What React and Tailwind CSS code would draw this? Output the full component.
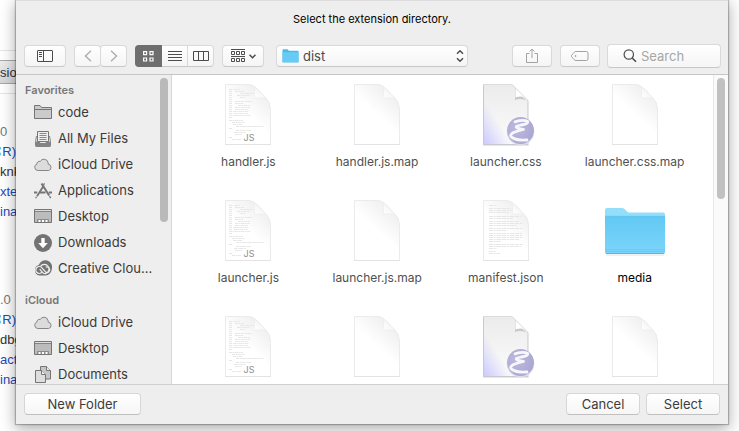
const toolButton =
  "flex h-[22px] items-center justify-center rounded-[4px] border border-[#d9d9d9] border-b-[#c8c8c8] bg-linear-to-b from-white to-[#f5f5f5]";
const pushButton =
  "h-[22px] rounded-[4px] border border-[#d6d6d6] border-b-[#c0c0c0] bg-linear-to-b from-white to-[#f6f6f6] text-[13px] leading-5 text-[#3c3c3c]";

/* ---------- sidebar icons ---------- */

function FolderIcon() {
  return (
    <svg width="18" height="18" viewBox="0 0 18 18" fill="#cbcbcb" stroke="#757575" strokeWidth="1">
      <path d="M.5 14.500V1.500h5.500l1.500 2h10v11z" />
      <path d="M.5 5.500h17" />
    </svg>
  );
}

function FilesIcon() {
  return (
    <svg width="18" height="18" viewBox="0 0 18 18">
      <path d="M3.500 1.500h11v10h-11z" fill="#f0f0f0" stroke="#757575" />
      <path d="M5.500 3.500h7M5.500 5.500h7M5.500 7.500h7M5.500 9.500h7" stroke="#8a8a8a" fill="none" />
      <path d="M2.500 6L1.500 11.500v4.200q0 .8.800.8h13.400q.8 0 .8-.8v-4.200L15.500 6" fill="none" stroke="#858585" />
      <path d="M1.500 11.500h4l1 1.500h5l1-1.500h4v5h-15z" fill="#838383" />
    </svg>
  );
}

function CloudIcon() {
  return (
    <svg width="18" height="18" viewBox="0 0 18 18">
      <path
        d="M3.900 14.500a3.300 3.300 0 0 1-1-6.400 2.600 2.600 0 0 1 3.300-2.700 4.300 4.300 0 0 1 8 1.500c.1.500.1.900 0 1.300a3.200 3.200 0 0 1 .4 6.300z"
        fill="#dcdcdc"
        stroke="#868686"
      />
    </svg>
  );
}

function AppsIcon() {
  return (
    <svg width="18" height="18" viewBox="0 0 18 18" fill="none" stroke="#757575">
      <path d="M9.800 3.500L3 14.300" strokeWidth="1.800" />
      <path d="M7.500 1.500L15.200 13.500" strokeWidth="2" />
      <path d="M10.500 1.300l-.9 1.500M2.400 14.800l-.7 1.400M15.500 14.200l1.200 2" strokeWidth="1.300" />
      <path d="M0 10.500h3.200M6 10.500h5.500M14.800 10.500H18" strokeWidth="2" />
    </svg>
  );
}

function DesktopIcon() {
  return (
    <svg width="18" height="18" viewBox="0 0 18 18">
      <path d="M.5 1.500h17v13H.5z" fill="#bcbcbc" stroke="#757575" />
      <path d="M1 2.500h16" stroke="#dedede" />
      <path d="M1 3.500h16" stroke="#858585" />
      <path d="M3.500 14v-2.500h11V14" fill="#909090" stroke="#8a8a8a" />
      <path d="M4.500 13h2M8 13h2M11.500 13h2" stroke="#fff" strokeWidth="1.800" />
    </svg>
  );
}

function DownloadsIcon() {
  return (
    <svg width="18" height="18" viewBox="0 0 18 18">
      <circle cx="9" cy="9" r="9" fill="#737373" />
      <path d="M7.300 4h3.400v5h3.100L9 14.200 4.200 9h3.100z" fill="#fff" />
    </svg>
  );
}

function CreativeCloudIcon() {
  return (
    <svg width="18" height="18" viewBox="0 0 18 18">
      <path
        d="M5.500 15.500A5.400 5.400 0 0 1 4.800 5 6.800 6.800 0 0 1 17.800 9a6.500 6.500 0 0 1-6.300 6.500z"
        fill="#737373"
      />
      <g fill="none" stroke="#f0f0f0" strokeWidth="1.200">
        <path d="M8 12.200A3.500 3.500 0 1 1 8 7.800l3.500 4.100a2.700 2.700 0 1 0 .2-4.600" />
        <path d="M6.500 6.400a4.700 4.700 0 1 1 5 7.300c-1.300 0-2.300-.5-3-1.400L5.700 9.200" />
      </g>
    </svg>
  );
}

function DocumentsIcon() {
  return (
    <svg width="18" height="18" viewBox="0 0 18 18" stroke="#757575" strokeLinejoin="round">
      <path d="M6.500.5h6l4 4v8.500h-10z" fill="#c6c6c6" />
      <path d="M12.500.5v4h4" fill="#eee" />
      <path d="M1.500 4.500h6l4 4v8h-10z" fill="#dedede" />
      <path d="M7.500 4.500v4h4" fill="#f4f4f4" />
    </svg>
  );
}

/* ---------- file icons ---------- */

const codeLines = [
  [13, 6, 4], [18, 6, 6], [13, 8, 3], [19, 8, 9], [13, 10, 3], [24, 10, 13], [13, 12, 3], [21, 12, 13],
  [13, 14, 3], [24, 14, 5], [13, 16, 3], [13, 18, 3], [19, 18, 17], [13, 20, 3], [19, 20, 8], [13, 22, 3],
  [22, 22, 12], [13, 24, 3], [19, 24, 15], [13, 26, 3], [19, 26, 13], [13, 28, 3], [17, 28, 16], [13, 30, 3],
  [18, 30, 14], [13, 32, 22], [13, 34, 3], [13, 37, 14], [16, 39, 13], [17, 41, 9], [20, 43, 28], [13, 45, 3],
  [20, 47, 15], [18, 49, 12], [19, 51, 7], [13, 54, 3], [16, 56, 9],
];

const proseLines = [
  [15, 6, 8], [15, 9, 22], [15, 11, 26], [15, 13, 20], [15, 17, 32], [15, 19, 24], [15, 22, 30], [15, 24, 34],
  [15, 26, 28], [15, 29, 34], [15, 31, 17], [15, 34, 33], [15, 36, 34], [15, 38, 34], [15, 40, 30], [15, 42, 12],
  [15, 45, 34], [15, 47, 32], [15, 49, 8], [15, 52, 7], [15, 54, 11],
];

function Sheet({ id, lines, dash }) {
  return (
    <>
      <defs>
        <linearGradient id={`${id}-page`} x1=".78" y1=".1" x2=".5" y2=".5">
          <stop offset="0" stopColor="#efefef" />
          <stop offset="1" stopColor="#fff" />
        </linearGradient>
        <linearGradient id={`${id}-fold`} x1="0" y1="1" x2=".6" y2=".4">
          <stop offset="0" stopColor="#fff" />
          <stop offset="1" stopColor="#f5f5f5" />
        </linearGradient>
      </defs>
      <path
        d="M9.500 1.500H33Q37 1.500 42 6.500L49 14Q54.500 19 54.500 26V61.500H9.500z"
        fill={`url(#${id}-page)`}
        stroke="#ebebeb"
      />
      <path d="M9 61.500h46" stroke="#e3e3e3" />
      {lines.map(([x, y, w]) => (
        <path key={`${x}-${y}`} d={`M${x} ${y + 0.5}h${w}`} stroke="#e6e6e6" strokeDasharray={dash} />
      ))}
      <path d="M38.500 4V13.500Q38.500 15 40 15H50z" fill={`url(#${id}-fold)`} stroke="#eeeeee" strokeWidth=".8" />
    </>
  );
}

function ScriptFile({ id }) {
  return (
    <svg width="64" height="64" viewBox="0 0 64 64">
      <Sheet id={id} lines={codeLines} dash="3 .6 2 .5" />
      <text x="33" y="58" textAnchor="middle" fontSize="9" fill="#8f8f8f" className="font-[Inter,sans-serif]">
        JS
      </text>
    </svg>
  );
}

function BlankFile({ id }) {
  return (
    <svg width="64" height="64" viewBox="0 0 64 64">
      <Sheet id={id} lines={[]} />
    </svg>
  );
}

function TextFile({ id }) {
  return (
    <svg width="64" height="64" viewBox="0 0 64 64">
      <Sheet id={id} lines={proseLines} dash="4 .7 2 .7 5 .7" />
    </svg>
  );
}

function StyleFile({ id }) {
  return (
    <svg width="64" height="64" viewBox="0 0 64 64">
      <defs>
        <linearGradient id={`${id}-page`} x1="0" y1="0" x2="0" y2="1">
          <stop offset="0" stopColor="#ebebeb" />
          <stop offset="1" stopColor="#fcfcfc" />
        </linearGradient>
        <linearGradient id={`${id}-tint`} x1="0" y1="1" x2=".38" y2=".66">
          <stop offset="0" stopColor="#c9c7fc" />
          <stop offset="1" stopColor="#c9c7fc" stopOpacity="0" />
        </linearGradient>
        <radialGradient id={`${id}-ball`} cx=".35" cy=".4" r=".7">
          <stop offset="0" stopColor="#bcb9de" />
          <stop offset="1" stopColor="#a9a7d3" />
        </radialGradient>
      </defs>
      <path d="M9.500 2.500H38.500L54.500 18V62.500H9.500z" fill="#d6d6d6" stroke="#e6e6e6" />
      <path d="M9 1H38L54 17V61.500H9z" fill={`url(#${id}-page)`} />
      <path d="M9 1H38L54 17V61.500H9z" fill={`url(#${id}-tint)`} />
      <path d="M9.500 1V61.500H54" fill="none" stroke="#c9c9d2" />
      <path d="M9 1.500H38L53.500 17V61" fill="none" stroke="#dcdcdc" />
      <path d="M41 5v12q5-2 11 .5z" fill="#c9c9c9" />
      <path d="M41.500 5.500V14.500q4-1.500 8.500-.5z" fill="#fff" />
      <circle cx="46.500" cy="48.500" r="13.800" fill="#dcdce2" />
      <circle cx="46.500" cy="47.500" r="13.400" fill={`url(#${id}-ball)`} />
      <path
        d="M41 38.800Q49 36.300 53.500 38.200Q55 41 47 42Q41 43.300 42.500 44.300Q44 45.500 49.500 46.500Q43 48 39 49.800Q34.800 52.500 38 54.500Q43 57.800 53 57"
        fill="none"
        stroke="#f6f6fc"
        strokeWidth="2.800"
        strokeLinecap="round"
        strokeLinejoin="round"
      />
    </svg>
  );
}

function MediaFolder({ id }) {
  return (
    <svg width="64" height="64" viewBox="0 0 64 64">
      <defs>
        <linearGradient id={`${id}-front`} x1="0" y1="0" x2="0" y2="1">
          <stop offset="0" stopColor="#62c9f3" />
          <stop offset="1" stopColor="#7bd5fa" />
        </linearGradient>
      </defs>
      <path d="M3 55.500h58v1H3z" fill="#dde2e5" />
      <path d="M2 11q0-2 2-2h15q2 0 3.500 2l1.500 1.500q.8 1 2.500 1H60q2 0 2 2V30H2z" fill="#93defb" />
      <path d="M2 17h60v36q0 2-2 2H4q-2 0-2-2z" fill={`url(#${id}-front)`} />
      <path d="M2 17.300h60" stroke="#5fc2ec" strokeWidth=".6" />
      <path d="M2 50.500h60M2 52.500h60" stroke="#68c4ec" strokeWidth=".7" />
      <path d="M3 54.500h58" stroke="#5cb8e2" />
    </svg>
  );
}

/* ---------- data ---------- */

const sections = [
  {
    title: "Favorites",
    head: "pt-[7px]",
    items: [
      ["code", FolderIcon],
      ["All My Files", FilesIcon],
      ["iCloud Drive", CloudIcon],
      ["Applications", AppsIcon],
      ["Desktop", DesktopIcon],
      ["Downloads", DownloadsIcon],
      ["Creative Clou...", CreativeCloudIcon],
    ],
  },
  {
    title: "iCloud",
    head: "pt-[10px]",
    items: [
      ["iCloud Drive", CloudIcon],
      ["Desktop", DesktopIcon],
      ["Documents", DocumentsIcon],
    ],
  },
];

const files = [
  ["handler.js", ScriptFile],
  ["handler.js.map", BlankFile],
  ["launcher.css", StyleFile],
  ["launcher.css.map", BlankFile],
  ["launcher.js", ScriptFile],
  ["launcher.js.map", BlankFile],
  ["manifest.json", TextFile],
  ["media", MediaFolder, true],
  ["", ScriptFile],
  ["", BlankFile],
  ["", StyleFile],
  ["", BlankFile],
];

/* ---------- page behind the dialog ---------- */

function ExtensionRows({ version, id, path, view }) {
  return (
    <div className="text-[13px] leading-5 whitespace-nowrap">
      <p className="text-[#777]">{version}</p>
      <p className="flex justify-end text-[#1a4bc0]">⌘R)</p>
      <p className="text-[#303030]">{id}</p>
      <p className="text-[#1a4bc0]">{path}</p>
      <p className="text-[#1a4bc0]">{view}</p>
    </div>
  );
}

function Backdrop() {
  return (
    <div className="w-4 shrink-0 overflow-hidden font-['Liberation_Sans',Arial,sans-serif]">
      <div className="mt-[50px] flex h-11 items-center border-y border-[#e6e6e6]">
        <button className="h-6 w-10 shrink-0 border-y border-[#a8a8a8] bg-linear-to-b from-[#ededed] to-[#d6d6d6] pt-0.5 text-left text-[13px] text-[#333]">
          sion
        </button>
      </div>
      <div className="mt-7">
        <ExtensionRows version="0" id="knk" path="xten" view="inac" />
      </div>
      <div className="mt-[68px]">
        <ExtensionRows version=".0" id="dbg" path="act-" view="inac" />
      </div>
    </div>
  );
}

/* ---------- dialog ---------- */

function Toolbar() {
  return (
    <div className="flex h-6 items-center pr-[7px] pl-2">
      <button aria-label="Sidebar" className={`${toolButton} w-[42px]`}>
        <svg width="16" height="12" viewBox="0 0 16 12" fill="none" stroke="#4c4c4c">
          <rect x=".5" y=".5" width="15" height="11" rx=".5" />
          <path d="M6.500 1v10M2 2.500h3M2 4.500h3M2 6.500h3" />
        </svg>
      </button>

      <div className="ml-2 flex">
        <button aria-label="Back" className={`${toolButton} w-[27px]`}>
          <svg width="8" height="12" viewBox="0 0 8 12" fill="none" stroke="#b0b0b0" strokeWidth="1.500">
            <path d="M7 .8L1.500 6 7 11.200" />
          </svg>
        </button>
        <button aria-label="Forward" className={`${toolButton} -ml-px w-[27px]`}>
          <svg width="8" height="12" viewBox="0 0 8 12" fill="none" stroke="#b0b0b0" strokeWidth="1.500">
            <path d="M1 .8L6.500 6 1 11.200" />
          </svg>
        </button>
      </div>

      <div className="ml-2 flex h-[22px] w-[79px] rounded-[4px] border border-[#d9d9d9] border-b-[#c8c8c8] bg-linear-to-b from-white to-[#f5f5f5]">
        <button
          aria-label="Icons"
          className="-my-px -ml-px flex w-[27px] items-center justify-center rounded-l-[4px] bg-[#6e6e6e]"
        >
          <svg width="11" height="11" viewBox="0 0 11 11" fill="none" stroke="#fff" strokeWidth="1.200">
            <path d="M.6.6h3v3h-3zM7 .6h3v3H7zM.6 7h3v3h-3zM7 7h3v3H7z" />
          </svg>
        </button>
        <button aria-label="List" className="flex flex-1 items-center justify-center border-r border-[#d9d9d9]">
          <svg width="14" height="10" viewBox="0 0 14 10" stroke="#4c4c4c">
            <path d="M0 .5h14M0 3.500h14M0 6.500h14M0 9.500h14" />
          </svg>
        </button>
        <button aria-label="Columns" className="flex flex-1 items-center justify-center">
          <svg width="16" height="10" viewBox="0 0 16 10" fill="none" stroke="#4c4c4c">
            <path d="M.5.5h15v9H.5zM5.500.5v9M10.500.5v9" />
          </svg>
        </button>
      </div>

      <button aria-label="Arrange" className={`${toolButton} ml-2 w-[42px] gap-1`}>
        <svg width="14" height="14" viewBox="0 0 14 14" fill="none" stroke="#4c4c4c">
          <path d="M0 .5h14M0 7.500h14" />
          <path d="M.5 2.500h3v3h-3zM5.500 2.500h3v3h-3zM10.500 2.500h3v3h-3zM.5 9.500h3v3h-3zM5.500 9.500h3v3h-3zM10.500 9.500h3v3h-3z" />
        </svg>
        <svg width="7" height="5" viewBox="0 0 7 5" fill="none" stroke="#4c4c4c" strokeWidth="1.500">
          <path d="M.5.8l3 3 3-3" />
        </svg>
      </button>

      <div className="relative ml-3 w-48">
        <select
          aria-label="Folder"
          className="block h-[22px] w-full appearance-none rounded-[4px] border border-[#d9d9d9] border-b-[#c8c8c8] bg-linear-to-b from-white to-[#f5f5f5] pl-[26px] text-[13px] leading-5 text-[#4a4a4a]"
        >
          <option>dist</option>
        </select>
        <svg className="pointer-events-none absolute top-1 left-1.5" width="17" height="14" viewBox="0 0 17 14">
          <path d="M.5 1q0-.7.700-.7h4.300l1.300 1.500h9q.7 0 .7.700v10.500q0 .5-.5.500H1q-.5 0-.5-.5z" fill="#4fb9e8" />
          <path d="M.5 3.200h16v9.300q0 .5-.5.500H1q-.5 0-.5-.5z" fill="#67cbf6" />
        </svg>
        <svg
          className="pointer-events-none absolute top-[5px] right-1"
          width="8"
          height="12"
          viewBox="0 0 8 12"
          fill="none"
          stroke="#4c4c4c"
          strokeWidth="1.500"
        >
          <path d="M1 3.800l3-3 3 3M1 8.200l3 3 3-3" />
        </svg>
      </div>

      <div className="flex-1" />

      <button aria-label="Share" className={`${toolButton} w-10`}>
        <svg width="12" height="16" viewBox="0 0 12 16" fill="none" stroke="#a2a2a2">
          <path d="M3.500 5.500h-3v9h11v-9h-3M6 10V1M3.500 3.500L6 1l2.500 2.500" />
        </svg>
      </button>
      <button aria-label="Tags" className={`${toolButton} ml-2 w-10`}>
        <svg width="18" height="10" viewBox="0 0 18 10" fill="none" stroke="#a2a2a2">
          <path d="M5 .5h10.500q1.500 0 1.500 1.500v6q0 1.500-1.500 1.500H5Q4 9.500 3.200 8.700L.7 5.800Q.2 5 .7 4.200L3.200 1.300Q4 .5 5 .5z" />
          <circle cx="4.500" cy="5" r=".6" />
        </svg>
      </button>

      <label className="ml-[7px] flex h-6 w-[114px] items-center rounded-[4px] border border-[#d9d9d9] border-b-[#c8c8c8] bg-linear-to-b from-white to-[#f5f5f5] pl-[15px]">
        <svg className="shrink-0" width="14" height="14" viewBox="0 0 14 14" fill="none" stroke="#4c4c4c" strokeWidth="1.200">
          <circle cx="5.800" cy="5.500" r="4.700" />
          <path d="M9.200 9L13 12.800" strokeWidth="1.600" />
        </svg>
        <input
          type="search"
          aria-label="Search"
          placeholder="Search"
          className="ml-1 w-full min-w-0 bg-transparent text-[13px] leading-5 placeholder:text-[#a6a6a6]"
        />
      </label>
    </div>
  );
}

function Sidebar() {
  return (
    <nav className="flex w-[156px] shrink-0 overflow-hidden border-r border-[#d6d6d6]">
      <div className="min-w-0 flex-1">
        {sections.map(({ title, head, items }) => (
          <section key={title}>
            <h2 className={`${head} pb-0.5 pl-[9px] text-[11px] leading-4 font-semibold text-[#777]`}>{title}</h2>
            <ul>
              {items.map(([label, Icon]) => (
                <li key={label}>
                  <a href="#" className="flex h-[26px] items-center gap-1.5 pl-[18px] text-[13px] whitespace-nowrap text-[#3a3a3a]">
                    <Icon />
                    {label}
                  </a>
                </li>
              ))}
            </ul>
          </section>
        ))}
      </div>
      <div className="mt-[3px] mr-[3px] h-36 w-2 shrink-0 rounded-full bg-[#b9b9b9]" />
    </nav>
  );
}

function FileGrid() {
  return (
    <main className="flex min-w-0 flex-1 overflow-hidden bg-white">
      <ul className="grid min-w-0 flex-1 auto-rows-[116px] grid-cols-4 content-start pr-[14px] pl-3">
        {files.map(([name, Icon, enabled], i) => (
          <li key={i} className="flex flex-col items-center pt-2">
            <Icon id={`file${i}`} />
            <span
              className={`mt-[7px] text-[12px] leading-4 whitespace-nowrap ${enabled ? "text-black" : "text-[#505050]"}`}
            >
              {name}
            </span>
          </li>
        ))}
      </ul>
      <div className="w-[15px] shrink-0 border-l border-[#e8e8e8] bg-[#fafafa] pt-[3px] pl-[3px]">
        <div className="h-[121px] w-2 rounded-full bg-[#c1c1c1]" />
      </div>
    </main>
  );
}

export default function App() {
  return (
    <div className="flex h-screen overflow-hidden bg-white pr-[11px] pb-[7px] font-[Inter,sans-serif]">
      <Backdrop />
      <div
        role="dialog"
        aria-labelledby="dialog-title"
        className="relative flex min-w-0 flex-1 flex-col bg-[#eeeeee] shadow-[0_0_1px_1px_rgba(0,0,0,0.24),0_4px_14px_1px_rgba(0,0,0,0.32)]"
      >
        <header className="shrink-0 border-t border-b border-t-[#dcdcdc] border-b-[#c6c6c6] pb-1.5">
          <h1 id="dialog-title" className="pt-[10px] pb-[17px] text-center text-[11px] leading-4 text-black">
            Select the extension directory.
          </h1>
          <Toolbar />
        </header>
        <div className="flex min-h-0 flex-1">
          <Sidebar />
          <FileGrid />
        </div>
        <footer className="flex h-10 shrink-0 items-center gap-1.5 border-t border-[#d0d0d0] px-2 pb-0.5">
          <button className={`${pushButton} w-[117px]`}>New Folder</button>
          <div className="flex-1" />
          <button className={`${pushButton} w-[74px]`}>Cancel</button>
          <button className={`${pushButton} w-[74px]`}>Select</button>
        </footer>
      </div>
    </div>
  );
}
